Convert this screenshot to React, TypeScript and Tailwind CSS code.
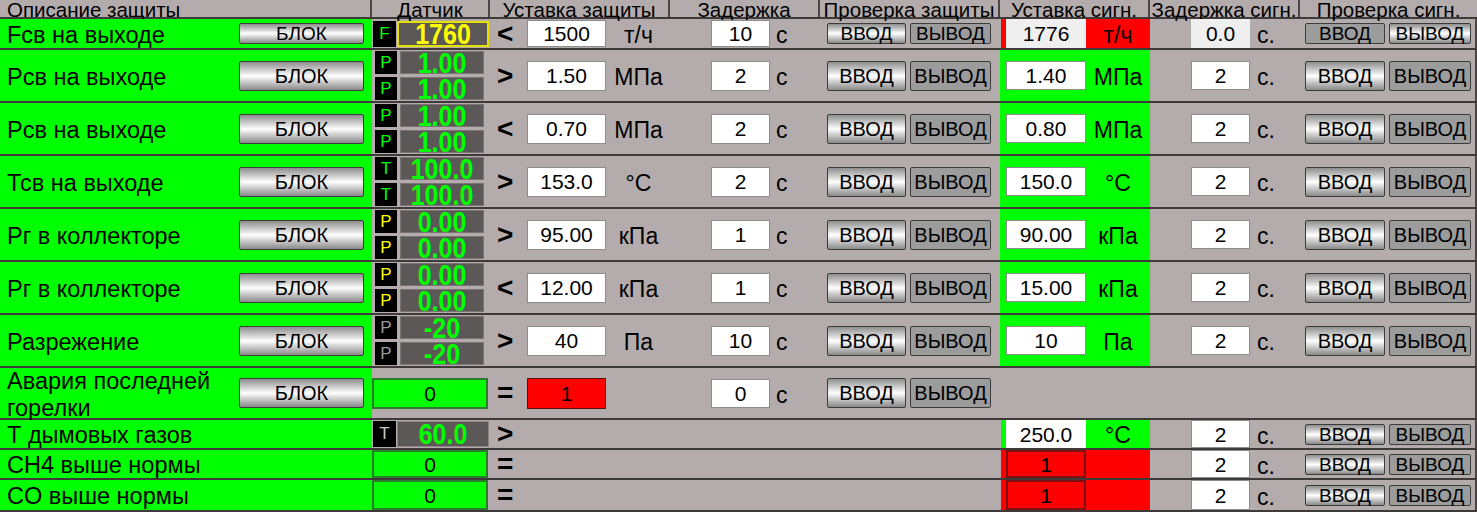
import clsx from "clsx";
import type { ReactNode } from "react";

type Tone = "g" | "y" | "d" | "w";
const toneCls: Record<Tone, string> = {
  g: "text-[#00ff00]",
  y: "text-[#ffff00]",
  d: "text-[#9a9a9a]",
  w: "text-[#c8c8c8]",
};

function Btn({ label, up, tall, w = "w-[80px]" }: { label: string; up: boolean; tall?: boolean; w?: string }) {
  return (
    <div
      className={clsx(
        "flex shrink-0 items-center justify-center rounded-[2px] border border-[#3c3c3c] leading-none text-black",
        w,
        tall ? "h-[30px] text-[20px]" : "h-[21px] text-[19px]",
        up ? "bg-linear-to-b from-[#8e8e8e] via-white to-[#8a8a8a]" : "bg-[#9c9c9c]"
      )}
    >
      {label}
    </div>
  );
}

function Field({ v, cls }: { v: string; cls: string }) {
  return (
    <div className={clsx("flex shrink-0 items-center justify-center text-[21px] leading-none text-black", cls)}>{v}</div>
  );
}

function Big({ v, tone }: { v: string; tone: Tone }) {
  return <span className={clsx("inline-block scale-y-[1.15] text-[25px] font-bold leading-[20px]", toneCls[tone])}>{v}</span>;
}

// одиночный датчик (F / T)
function Single({ l, lt, v, vt, frame }: { l: string; lt: Tone; v: string; vt: Tone; frame?: boolean }) {
  return (
    <div className="flex w-[118px] shrink-0 items-center gap-[1px] pl-[1px]">
      <div className={clsx("flex h-[26px] w-[23px] items-center justify-center bg-black text-[17px]", toneCls[lt])}>{l}</div>
      <div
        className={clsx(
          "flex h-[26px] w-[92px] items-center justify-center bg-[#5c5858]",
          frame ? "border-2 border-[#e8e000]" : "border border-[#8a8484]"
        )}
      >
        <Big v={v} tone={vt} />
      </div>
    </div>
  );
}

// сдвоенный датчик
function Double({ l, lt, v }: { l: string; lt: Tone; v: string }) {
  const line = (
    <div className="flex items-center gap-[3px]">
      <div className={clsx("flex h-[23px] w-[22px] items-center justify-center bg-black text-[17px]", toneCls[lt])}>{l}</div>
      <div className="flex h-[23px] w-[84px] items-center justify-center border border-[#7a7474] bg-[#5c5858]">
        <Big v={v} tone="g" />
      </div>
    </div>
  );
  return (
    <div className="flex w-[118px] shrink-0 flex-col justify-center gap-[3px] pl-[3px]">
      {line}
      {line}
    </div>
  );
}

function Flag({ full }: { full?: boolean }) {
  return (
    <div className="flex w-[118px] shrink-0 items-center">
      <div
        className={clsx(
          "flex w-[116px] items-center justify-center border-2 border-[#2c7a2c] bg-[#00ff00] text-[21px] leading-none",
          full ? "h-full" : "h-[31px]"
        )}
      >
        0
      </div>
    </div>
  );
}

type Prot = {
  name: ReactNode;
  h: string;
  tall: boolean;
  blok?: boolean;
  sensor: ReactNode;
  cmp: string;
  set?: string;
  unit?: string;
  redSet?: boolean;
  delay?: string;
  check?: boolean;
  sig: "head" | "green" | "green9" | "red" | "none";
  sigVal?: string;
  sigUnit?: string;
  sigDelay?: string;
};

const rows: Prot[] = [
  {
    name: "Fсв на выходе", h: "h-[31px]", tall: false, blok: true,
    sensor: <Single l="F" lt="g" v="1760" vt="y" frame />,
    cmp: "<", set: "1500", unit: "т/ч", delay: "10", check: true,
    sig: "head", sigVal: "1776", sigUnit: "т/ч", sigDelay: "0.0",
  },
  {
    name: "Рсв на выходе", h: "h-[53px]", tall: true, blok: true,
    sensor: <Double l="P" lt="g" v="1.00" />,
    cmp: ">", set: "1.50", unit: "МПа", delay: "2", check: true,
    sig: "green", sigVal: "1.40", sigUnit: "МПа", sigDelay: "2",
  },
  {
    name: "Рсв на выходе", h: "h-[53px]", tall: true, blok: true,
    sensor: <Double l="P" lt="g" v="1.00" />,
    cmp: "<", set: "0.70", unit: "МПа", delay: "2", check: true,
    sig: "green", sigVal: "0.80", sigUnit: "МПа", sigDelay: "2",
  },
  {
    name: "Тсв на выходе", h: "h-[53px]", tall: true, blok: true,
    sensor: <Double l="T" lt="g" v="100.0" />,
    cmp: ">", set: "153.0", unit: "°C", delay: "2", check: true,
    sig: "green", sigVal: "150.0", sigUnit: "°C", sigDelay: "2",
  },
  {
    name: "Рг в коллекторе", h: "h-[53px]", tall: true, blok: true,
    sensor: <Double l="P" lt="y" v="0.00" />,
    cmp: ">", set: "95.00", unit: "кПа", delay: "1", check: true,
    sig: "green", sigVal: "90.00", sigUnit: "кПа", sigDelay: "2",
  },
  {
    name: "Рг в коллекторе", h: "h-[53px]", tall: true, blok: true,
    sensor: <Double l="P" lt="y" v="0.00" />,
    cmp: "<", set: "12.00", unit: "кПа", delay: "1", check: true,
    sig: "green", sigVal: "15.00", sigUnit: "кПа", sigDelay: "2",
  },
  {
    name: "Разрежение", h: "h-[53px]", tall: true, blok: true,
    sensor: <Double l="P" lt="d" v="-20" />,
    cmp: ">", set: "40", unit: "Па", delay: "10", check: true,
    sig: "green", sigVal: "10", sigUnit: "Па", sigDelay: "2",
  },
  {
    name: (
      <>
        Авария последней
        <br />
        горелки
      </>
    ),
    h: "h-[52px]", tall: true, blok: true,
    sensor: <Flag />,
    cmp: "=", set: "1", redSet: true, delay: "0", check: true,
    sig: "none",
  },
  {
    name: "Т дымовых газов", h: "h-[30px]", tall: false,
    sensor: <Single l="T" lt="w" v="60.0" vt="g" />,
    cmp: ">", sig: "green9", sigVal: "250.0", sigUnit: "°C", sigDelay: "2",
  },
  {
    name: "CH4 выше нормы", h: "h-[30px]", tall: false,
    sensor: <Flag full />, cmp: "=", sig: "red", sigVal: "1", sigDelay: "2",
  },
  {
    name: "CO выше нормы", h: "h-[32px]", tall: false,
    sensor: <Flag full />, cmp: "=", sig: "red", sigVal: "1", sigDelay: "2",
  },
];

function SigSet({ r }: { r: Prot }) {
  if (r.sig === "none") return <div className="w-[150px] shrink-0" />;
  if (r.sig === "green") {
    return (
      <div className="flex w-[150px] shrink-0 items-center bg-[#00ff00] pl-[6px] text-black">
        <Field v={r.sigVal!} cls="h-[29px] w-[80px] border border-[#8c8c8c] bg-white" />
        <div className="flex-1 pt-[4px] text-center text-[23px] leading-none">{r.sigUnit}</div>
      </div>
    );
  }
  const head = r.sig === "head";
  const red = r.sig === "red";
  return (
    <div className="flex w-[150px] shrink-0 items-stretch text-black">
      <div className={clsx("ml-[1px] w-[5px]", r.sig === "green9" ? "bg-[#00ff00]" : "bg-[#ff0000]")} />
      <Field
        v={r.sigVal!}
        cls={clsx(
          "w-[80px]",
          head && "bg-[#efefef]",
          red && "border-2 border-[#7a1010] bg-[#ff0000]",
          r.sig === "green9" && "bg-white"
        )}
      />
      <div
        className={clsx(
          "flex flex-1 items-center justify-center pt-[3px] text-[23px] leading-none",
          r.sig === "green9" ? "bg-[#00ff00]" : "bg-[#ff0000]"
        )}
      >
        {r.sigUnit}
      </div>
    </div>
  );
}

const heads: [string, string][] = [
  ["Описание защиты", "w-[372px] justify-start pl-[7px]"],
  ["Датчик", "w-[118px] justify-center"],
  ["Уставка защиты", "w-[180px] justify-center"],
  ["Задержка", "w-[150px] justify-center"],
  ["Проверка защиты", "w-[180px] justify-center"],
  ["Уставка сигн.", "w-[150px] justify-center"],
  ["Задержка сигн.", "w-[150px] justify-center"],
  ["Проверка сигн.", "w-[177px] justify-center"],
];

export default function App() {
  return (
    <div className="h-[512px] w-[1477px] overflow-hidden bg-[#b4acac] font-['Liberation_Sans',Arial,sans-serif] text-black">
      <div className="flex h-[19px] border-b-2 border-[#3e3a3a]">
        {heads.map(([t, c], i) => (
          <div
            key={t}
            className={clsx(
              "flex shrink-0 items-start whitespace-nowrap pt-[1px] text-[20.5px] leading-[17px]",
              c,
              i < heads.length - 1 && "border-r-2 border-[#4a4444]"
            )}
          >
            {t}
          </div>
        ))}
      </div>

      {rows.map((r, i) => {
        const fh = r.tall ? "h-[30px]" : "h-[27px]";
        return (
          <div key={i} className={clsx("flex border-b-2 border-[#3e3a3a]", r.h)}>
            <div className="flex w-[372px] shrink-0 items-center justify-between bg-[#00ff00] pr-[8px] pl-[7px] text-[23.5px] leading-[27px]">
              <span className="pt-[3px]">{r.name}</span>
              {r.blok && <Btn label="БЛОК" up tall={r.tall} w="w-[125px]" />}
            </div>

            {r.sensor}

            <div className="flex w-[37px] shrink-0 items-center pl-[7px] text-[28px] font-bold leading-none">{r.cmp}</div>

            <div className="flex w-[80px] shrink-0 items-center">
              {r.set && (
                <Field
                  v={r.set}
                  cls={clsx(
                    "w-[79px]",
                    r.redSet ? "h-[31px] border border-[#5a1010] bg-[#ff0000]" : clsx(fh, "border border-[#8c8c8c] bg-white")
                  )}
                />
              )}
            </div>
            <div className="flex w-[63px] shrink-0 items-center justify-center pt-[4px] text-[23px] leading-none">{r.unit}</div>

            <div className="flex w-[150px] shrink-0 items-center pl-[41px]">
              {r.delay && (
                <>
                  <Field v={r.delay} cls={clsx("w-[59px] border border-[#8c8c8c] bg-white", r.redSet ? "h-[29px]" : fh)} />
                  <span className="ml-[6px] pt-[4px] text-[23px] leading-none">с</span>
                </>
              )}
            </div>

            <div className="flex w-[180px] shrink-0 items-center gap-[4px] pl-[7px]">
              {r.check && (
                <>
                  <Btn label="ВВОД" up tall={r.tall} w="w-[79px]" />
                  <Btn label="ВЫВОД" up={false} tall={r.tall} w="w-[81px]" />
                </>
              )}
            </div>

            <SigSet r={r} />

            <div className="flex w-[150px] shrink-0 items-center pl-[41px]">
              {r.sigDelay && (
                <>
                  <Field
                    v={r.sigDelay}
                    cls={clsx(
                      "w-[59px]",
                      r.sig === "head" ? "h-full bg-[#efefef]" : r.tall ? "h-[29px] border border-[#8c8c8c] bg-white" : "h-full border border-[#8c8c8c] bg-white"
                    )}
                  />
                  <span className="ml-[7px] pt-[4px] text-[23px] leading-none">с.</span>
                </>
              )}
            </div>

            <div className="flex w-[177px] shrink-0 items-center gap-[4px] border-r-2 border-[#4a4444] pl-[5px]">
              {r.sig !== "none" && (
                <>
                  <Btn label="ВВОД" up={r.sig !== "head"} tall={r.tall} w="w-[80px]" />
                  <Btn label="ВЫВОД" up={r.sig === "head"} tall={r.tall} w="w-[82px]" />
                </>
              )}
            </div>
          </div>
        );
      })}
    </div>
  );
}
